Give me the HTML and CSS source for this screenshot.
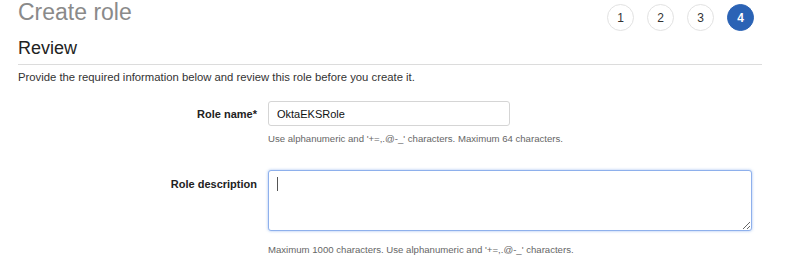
FILE: index.html
```html
<!DOCTYPE html>
<html lang="en">
<head>
  <meta charset="UTF-8" />
  <title>Create role</title>
  <link rel="stylesheet" href="styles.css">
</head>
<body>
  <div class="page">
    <div class="top">
      <h1>Create role</h1>
      <div class="steps">
        <span class="step">1</span>
        <span class="step">2</span>
        <span class="step">3</span>
        <span class="step active">4</span>
      </div>
    </div>

    <h2>Review</h2>
    <p class="intro">Provide the required information below and review this role before you create it.</p>

    <form class="fields">
      <label for="rolename">Role name*</label>
      <div class="field">
        <input type="text" id="rolename" class="name" value="OktaEKSRole" />
        <div class="hint">Use alphanumeric and '+=,.@-_' characters. Maximum 64 characters.</div>
      </div>

      <label for="desc" class="desc-label">Role description</label>
      <div class="field">
        <div class="area-wrap">
          <textarea id="desc" class="desc"></textarea>
          <span class="caret"></span>
        </div>
        <div class="hint">Maximum 1000 characters. Use alphanumeric and '+=,.@-_' characters.</div>
      </div>
    </form>
  </div>
</body>
</html>
```

FILE: styles.css
```css
body {
  margin: 0;
  font-family: "Liberation Sans", Arial, sans-serif;
  background: #ffffff;
  color: #333;
}

.page {
  padding: 0 26px 0 18px;
  width: 744px;
}

.top {
  display: flex;
  justify-content: space-between;
  align-items: flex-start;
}

h1 {
  margin: 0;
  font-size: 23px;
  font-weight: normal;
  color: #8a8a8a;
  line-height: 25px;
}

.steps {
  display: flex;
  gap: 13px;
  margin-top: 4px;
  margin-right: 8px;
}

.step {
  width: 25px;
  height: 25px;
  border: 1px solid #e2e2e2;
  border-radius: 50%;
  display: flex;
  align-items: center;
  justify-content: center;
  font-size: 12px;
  color: #333;
}

.step.active {
  background-color: #2b63b5;
  border-color: #2b63b5;
  color: white;
  font-weight: bold;
}

h2 {
  margin: 6px 0 0;
  font-size: 18px;
  font-weight: normal;
  color: #222;
  line-height: 22px;
  padding-bottom: 5px;
  border-bottom: 1px solid #dcdcdc;
}

.intro {
  margin: 6px 0 0;
  font-size: 11.3px;
  color: #333;
}

.fields {
  display: grid;
  grid-template-columns: 250px 1fr;
  margin-top: 18px;
}

label {
  text-align: right;
  padding-right: 11px;
  font-size: 11px;
  font-weight: bold;
  color: #222;
  padding-top: 7px;
}

.name {
  width: 242px;
  height: 25px;
  box-sizing: border-box;
  border: 1px solid #d5d5d5;
  border-radius: 3px;
  padding: 0 8px;
  font-family: "Liberation Sans", Arial, sans-serif;
  font-size: 11px;
  color: #111;
  text-decoration: underline dotted #e0443a;
  text-underline-offset: 2px;
  outline: none;
}

.hint {
  font-size: 9.6px;
  color: #666;
  margin-top: 7px;
}

.desc-label {
  margin-top: 25px;
  padding-top: 9px;
}

.field:nth-of-type(2) {
  margin-top: 26px;
}

.area-wrap {
  position: relative;
  width: 484px;
}

.desc {
  display: block;
  width: 484px;
  height: 61px;
  box-sizing: border-box;
  border: 1px solid #8eb0ec;
  border-radius: 3px;
  box-shadow: 0 0 3px rgba(100, 150, 230, 0.6);
  outline: none;
  resize: vertical;
}

.caret {
  position: absolute;
  left: 9px;
  top: 7px;
  width: 1px;
  height: 14px;
  background: #555;
}

.field:nth-of-type(2) .hint {
  margin-top: 13px;
}
```
